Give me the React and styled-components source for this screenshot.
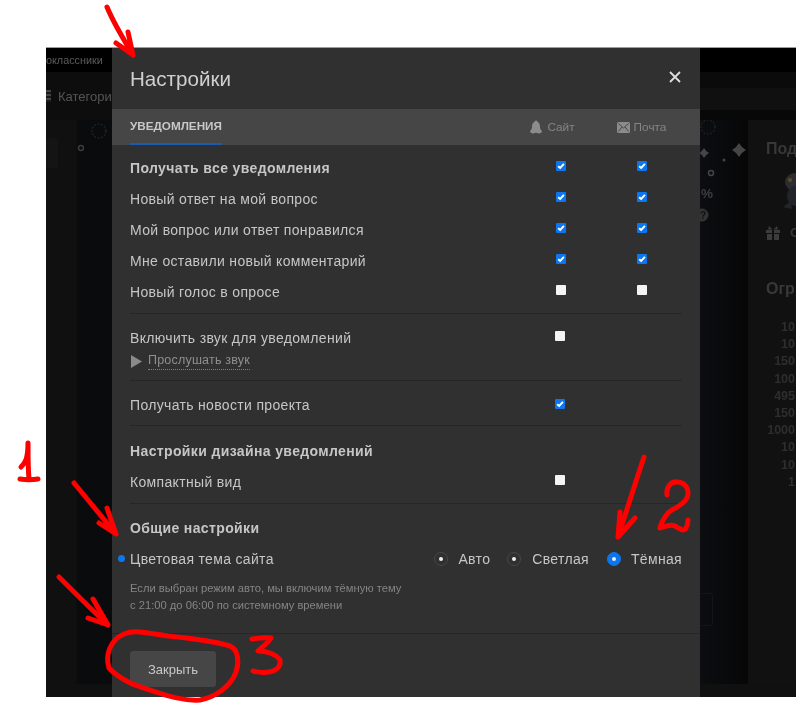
import React from "react";
import styled, { createGlobalStyle } from "styled-components";

const GlobalStyle = createGlobalStyle`
  html, body {
    margin: 0;
    background: #fff;
    font-family: "Liberation Sans", Arial, sans-serif;
  }
`;

const Page = styled.div`
  position: relative;
  width: 800px;
  height: 704px;
  padding: 47px 4px 7px 46px;
  box-sizing: border-box;
  overflow: hidden;
`;

const Screen = styled.div`
  display: flex;
  height: 650px;
  border-top: 1px solid #9a9ea2;
  box-sizing: border-box;
  filter: blur(0.35px);
`;

/* dimmed page behind the dialog */
const SideLeft = styled.div`
  width: 66px;
  flex: none;
  display: flex;
  flex-direction: column;
  overflow: hidden;
  background: linear-gradient(90deg, #101010 0, #101010 30px, #0a0b0d 31px, #0a0b0d 100%);
`;

const SideRight = styled.div`
  width: 96px;
  flex: none;
  display: flex;
  flex-direction: column;
  overflow: hidden;
  background: #0a0b0d;
`;

const TopBar = styled.div`
  height: 24px;
  flex: none;
  background: #000;
  color: #5c5c5c;
  font-size: 10.8px;
  line-height: 24px;
  white-space: nowrap;
`;

const NavBar = styled.div`
  height: 48px;
  flex: none;
  display: flex;
  align-items: center;
  gap: 7px;
  background: #0d0d0d;
  color: #555;
  font-size: 13px;
  white-space: nowrap;
`;

const NavStrip = styled.div`
  height: 48px;
  flex: none;
  background: linear-gradient(#0b0b0b 0 16px, #101010 16px 38px, #080808 38px);
`;

const MenuGlyph = styled.span`
  width: 5px;
  height: 12px;
  flex: none;
  background: repeating-linear-gradient(#444 0 2px, #1a1a1a 2px 4px);
`;

const LeftDeco = styled.svg`
  display: block;
  flex: 1;
`;

const BottomBand = styled.div`
  height: 13px;
  flex: none;
  background: #101010;
`;

const RightBody = styled.div`
  flex: 1;
  display: flex;
  min-height: 0;
`;

const Gutter = styled.div`
  width: 48px;
  flex: none;
  display: flex;
  flex-direction: column;
  justify-content: space-between;
  padding-bottom: 58px;
  background: linear-gradient(90deg, #0b0d10, #070707);
`;

const FaintBox = styled.div`
  width: 12px;
  height: 31px;
  border: 1px solid #131518;
  border-left: 0;
  border-radius: 0 3px 3px 0;
`;

const SidePanel = styled.div`
  flex: 1;
  padding: 19px 0 0 18px;
  background: #111;
  color: #383838;
  overflow: hidden;
  white-space: nowrap;
`;

const PanelTitle = styled.div`
  margin-top: ${(p) => p.$top || 0}px;
  font-size: 16px;
  font-weight: 700;
  line-height: 20px;
`;

const Owl = styled.svg`
  display: block;
  margin: 13px 0 0 17px;
`;

const PanelGift = styled.div`
  display: flex;
  align-items: center;
  gap: 10px;
  margin-top: 9px;
  font-size: 13px;
  font-weight: 700;
  svg {
    flex: none;
  }
`;

const Numbers = styled.div`
  margin-top: 20px;
  padding-right: 1px;
  text-align: right;
  font-size: 12.5px;
  font-weight: 700;
  line-height: 17.2px;
  color: #2e2e2e;
`;

/* dialog */
const Modal = styled.div`
  width: 588px;
  flex: none;
  display: flex;
  flex-direction: column;
  background: #303030;
  color: #c6c6c6;
`;

const Header = styled.div`
  height: 61px;
  flex: none;
  display: flex;
  align-items: center;
  justify-content: space-between;
  padding: 0 18px;
`;

const Title = styled.div`
  font-size: 20.6px;
  color: #cfcfcf;
`;

const CloseButton = styled.button`
  width: 14px;
  height: 14px;
  margin-top: -4px;
  padding: 0;
  display: flex;
  border: 0;
  background: none;
  color: #dedede;
`;

const TabBar = styled.div`
  height: 36px;
  flex: none;
  display: grid;
  grid-template-columns: 1fr 81px 81px;
  align-items: stretch;
  padding: 0 18px;
  background: #464646;
`;

const Tab = styled.div`
  justify-self: start;
  display: flex;
  align-items: center;
  padding-bottom: 2px;
  box-sizing: border-box;
  border-bottom: 2px solid #1b5bb0;
  font-size: 11.7px;
  font-weight: 700;
  color: #c8c8c8;
`;

const ColumnHead = styled.div`
  display: flex;
  align-items: center;
  justify-content: center;
  gap: ${(p) => p.$gap}px;
  padding-right: ${(p) => p.$shift || 0}px;
  font-size: 11.8px;
  color: #858585;
`;

const Body = styled.div`
  flex: 1;
  padding: 7px 18px 0;
`;

const Section = styled.div`
  padding-bottom: ${(p) => p.$bottom || 0}px;
  border-bottom: 1px solid #262626;
`;

const Row = styled.div`
  display: grid;
  grid-template-columns: 1fr 81px 81px;
  align-items: center;
  height: 31px;
  margin-top: ${(p) => p.$top || 0}px;
  font-size: 14px;
  letter-spacing: ${(p) => (p.$bold ? 0.37 : 0.33)}px;
  font-weight: ${(p) => (p.$bold ? 700 : 400)};
`;

const BoxCell = styled.div`
  display: flex;
  justify-content: center;
  transform: translate(${(p) => p.$x || 0}px, ${(p) => p.$y ?? -2}px);
`;

const CheckBox = styled.span`
  width: 10px;
  height: 10px;
  display: flex;
  border-radius: 1px;
  background: ${(p) => (p.$on ? "#0d76ee" : "#f4f4f4")};
`;

const ListenRow = styled.div`
  display: flex;
  align-items: center;
  gap: 5px;
  margin-top: -3px;
  height: 22px;
  font-size: 12.5px;
  letter-spacing: 0.2px;
  color: #8f8f8f;
`;

const ListenLink = styled.span`
  border-bottom: 1px dotted #808080;
  line-height: 14px;
  padding-bottom: 2px;
`;

const ThemeRow = styled.div`
  position: relative;
  display: flex;
  align-items: center;
  height: 31px;
  font-size: 14px;
  letter-spacing: 0.33px;
`;

const ThemeDot = styled.span`
  position: absolute;
  left: -12px;
  top: 12px;
  width: 7px;
  height: 7px;
  border-radius: 50%;
  background: #0d76ee;
`;

const ThemeLabel = styled.div`
  flex: 1;
`;

const RadioOption = styled.div`
  display: flex;
  align-items: center;
  gap: ${(p) => p.$gap}px;
  margin-left: ${(p) => p.$left || 0}px;
`;

const Radio = styled.span`
  width: 14px;
  height: 14px;
  box-sizing: border-box;
  display: flex;
  align-items: center;
  justify-content: center;
  border-radius: 50%;
  border: 1px solid ${(p) => (p.$on ? "#0d76ee" : "#474747")};
  background: ${(p) => (p.$on ? "#0d76ee" : "transparent")};
  &::after {
    content: "";
    width: 4px;
    height: 4px;
    border-radius: 50%;
    background: #eee;
  }
`;

const Hint = styled.div`
  margin-top: 6px;
  font-size: 11.2px;
  line-height: 17px;
  color: #858585;
`;

const Footer = styled.div`
  height: 64px;
  flex: none;
  box-sizing: border-box;
  padding: 17px 18px 0;
  border-top: 1px solid #262626;
`;

const CloseAction = styled.button`
  width: 86px;
  height: 36px;
  border: 0;
  border-radius: 3px;
  background: #464646;
  color: #c8c8c8;
  font-family: inherit;
  font-size: 13px;
`;

const Marks = styled.svg`
  position: absolute;
  left: 0;
  top: 0;
  pointer-events: none;
`;

const Check = ({ on }) => (
  <CheckBox $on={on}>
    {on && (
      <svg width="10" height="10" viewBox="0 0 10 10">
        <path d="M2.2 5.2 L4.2 7 L7.9 2.9" fill="none" stroke="#fff" strokeWidth="1.9" />
      </svg>
    )}
  </CheckBox>
);

const Bell = () => (
  <svg width="12" height="14" viewBox="0 0 12 14">
    <path d="M6 0.5c1 0 1.5.8 1.7 1.6C9.500 3 10 5 10 7c0 1.800.8 3 2 4 0 1.500-1.500 2.500-3 2.500-.8 0-1 -.8-3-.8s-2.200.8-3 .8c-1.500 0-3-1-3-2.500 1.200-1 2-2.200 2-4 0-2 .5-4 2.300-4.900C4.500 1.300 5 .5 6 .5z" fill="#8c8c8c" />
  </svg>
);

const Mail = () => (
  <svg width="13" height="11" viewBox="0 0 13 11">
    <rect width="13" height="11" rx="1.500" fill="#8c8c8c" />
    <path d="M1.500 1.500 L6.500 6 L11.500 1.500 M1.500 9.500 L5 5 M11.500 9.500 L8 5" fill="none" stroke="#464646" strokeWidth="1" />
  </svg>
);

const Sparkle = ({ x, y, r }) => (
  <path
    d={`M${x} ${y - r}Q${x + r * 0.35} ${y - r * 0.35} ${x + r} ${y}Q${x + r * 0.35} ${y + r * 0.35} ${x} ${y + r}Q${x - r * 0.35} ${y + r * 0.35} ${x - r} ${y}Q${x - r * 0.35} ${y - r * 0.35} ${x} ${y - r}z`}
    fill="#454545"
  />
);

const numbers = ["10", "10", "150", "100", "495", "150", "1000", "10", "10", "1"];

const App = () => (
  <Page>
    <GlobalStyle />
    <Screen>
      <SideLeft>
        <TopBar>оклассники</TopBar>
        <NavBar>
          <MenuGlyph />
          Категори
        </NavBar>
        <LeftDeco viewBox="0 0 66 565" preserveAspectRatio="xMinYMin">
          <circle cx="53" cy="11" r="7" fill="none" stroke="#3a3a3a" strokeWidth="1" strokeDasharray="1.500 2" />
          <circle cx="35" cy="28" r="2.500" fill="none" stroke="#3c3c3c" strokeWidth="1.500" />
          <rect x="0" y="18" width="12" height="30" rx="2" fill="#141414" />
        </LeftDeco>
        <BottomBand />
      </SideLeft>

      <Modal>
        <Header>
          <Title>Настройки</Title>
          <CloseButton aria-label="Закрыть">
            <svg width="14" height="14" viewBox="0 0 14 14">
              <path d="M2 2 L12 12 M12 2 L2 12" stroke="currentColor" strokeWidth="1.800" />
            </svg>
          </CloseButton>
        </Header>

        <TabBar>
          <Tab>УВЕДОМЛЕНИЯ</Tab>
          <ColumnHead $gap={5} $shift={16}>
            <Bell />
            Сайт
          </ColumnHead>
          <ColumnHead $gap={4}>
            <Mail />
            Почта
          </ColumnHead>
        </TabBar>

        <Body>
          <Section $bottom={6}>
            <Row $bold>
              Получать все уведомления
              <BoxCell><Check on /></BoxCell>
              <BoxCell><Check on /></BoxCell>
            </Row>
            <Row>
              Новый ответ на мой вопрос
              <BoxCell><Check on /></BoxCell>
              <BoxCell><Check on /></BoxCell>
            </Row>
            <Row>
              Мой вопрос или ответ понравился
              <BoxCell><Check on /></BoxCell>
              <BoxCell><Check on /></BoxCell>
            </Row>
            <Row>
              Мне оставили новый комментарий
              <BoxCell><Check on /></BoxCell>
              <BoxCell><Check on /></BoxCell>
            </Row>
            <Row>
              Новый голос в опросе
              <BoxCell><Check /></BoxCell>
              <BoxCell><Check /></BoxCell>
            </Row>
          </Section>

          <Section $bottom={8}>
            <Row $top={8}>
              Включить звук для уведомлений
              <BoxCell $x={-1}><Check /></BoxCell>
              <span />
            </Row>
            <ListenRow>
              <svg width="13" height="13" viewBox="0 0 13 13">
                <path d="M1 0 L12 6.500 L1 13z" fill="#8a8a8a" />
              </svg>
              <ListenLink>Прослушать звук</ListenLink>
            </ListenRow>
          </Section>

          <Section $bottom={5}>
            <Row $top={8}>
              Получать новости проекта
              <BoxCell $x={-1} $y={-1}><Check on /></BoxCell>
              <span />
            </Row>
          </Section>

          <Section $bottom={6}>
            <Row $bold $top={9}>
              Настройки дизайна уведомлений
              <span />
              <span />
            </Row>
            <Row>
              Компактный вид
              <BoxCell $x={-1}><Check /></BoxCell>
              <span />
            </Row>
          </Section>

          <Row $bold $top={8}>
            Общие настройки
            <span />
            <span />
          </Row>
          <ThemeRow>
            <ThemeDot />
            <ThemeLabel>Цветовая тема сайта</ThemeLabel>
            <RadioOption $gap={10}>
              <Radio />
              Авто
            </RadioOption>
            <RadioOption $gap={11} $left={17}>
              <Radio />
              Светлая
            </RadioOption>
            <RadioOption $gap={10} $left={18}>
              <Radio $on />
              Тёмная
            </RadioOption>
          </ThemeRow>
          <Hint>
            Если выбран режим авто, мы включим тёмную тему
            <br />
            с 21:00 до 06:00 по системному времени
          </Hint>
        </Body>

        <Footer>
          <CloseAction>Закрыть</CloseAction>
        </Footer>
      </Modal>

      <SideRight>
        <TopBar />
        <NavStrip />
        <RightBody>
          <Gutter>
            <svg width="48" height="110" viewBox="0 0 48 110">
              <circle cx="8" cy="7" r="7" fill="none" stroke="#333" strokeWidth="1" strokeDasharray="1.500 2" />
              <Sparkle x={4} y={33} r={5} />
              <Sparkle x={39} y={30} r={7} />
              <circle cx="24" cy="40" r="1.500" fill="#454545" />
              <circle cx="11" cy="53" r="2.500" fill="none" stroke="#454545" strokeWidth="1.500" />
              <text x="1" y="78" fontSize="13.5" fontFamily="Liberation Sans" fontWeight="700" fill="#3e3e3e">%</text>
              <circle cx="2" cy="95" r="6.500" fill="#333" />
              <text x="0" y="99" fontSize="10" fontFamily="Liberation Sans" fontWeight="700" fill="#111">?</text>
            </svg>
            <FaintBox />
          </Gutter>
          <SidePanel>
            <PanelTitle>Под</PanelTitle>
            <Owl width="30" height="44" viewBox="0 0 30 44">
              <ellipse cx="12" cy="10" rx="10" ry="9" fill="#2b2d33" />
              <ellipse cx="12" cy="24" rx="8" ry="10" fill="#22242a" />
              <circle cx="7" cy="8" r="2" fill="#6a4a1a" />
              <path d="M0 35 L8 29 L9 37z" fill="#22242a" />
            </Owl>
            <PanelGift>
              <svg width="14" height="14" viewBox="0 0 14 14">
                <path d="M0 4h6v3H0zM8 4h6v3H8zM1 8h5v6H1zM8 8h5v6H8zM3 0l3.500 3.500L2 3.500zM11 0L7.500 3.500 12 3.500z" fill="#3c3c3c" />
              </svg>
              С
            </PanelGift>
            <PanelTitle $top={39}>Огр</PanelTitle>
            <Numbers>
              {numbers.map((n, i) => (
                <div key={i}>{n}</div>
              ))}
            </Numbers>
          </SidePanel>
        </RightBody>
        <BottomBand />
      </SideRight>
    </Screen>

    <Marks width="800" height="704" viewBox="0 0 800 704" fill="none" stroke="#ff0000" strokeWidth="5" strokeLinecap="round" strokeLinejoin="round">
      <path d="M107 7 C114 24 124 40 133 55 M116 43 L133 55 L128 32" />
      <path d="M21 467 C25 463 28 459 28 443 C28 455 28 468 29 479 M20 479 C26 480 32 480 38 479" />
      <path d="M74 483 C88 500 103 518 116 534 M99 523 L116 534 L107 508" />
      <path d="M59 577 C74 592 92 610 108 625 M88 618 L108 625 L93 599" />
      <path d="M644 457 C635 484 626 512 618 537 M620 512 L618 537 L635 518" />
      <path d="M667 495 C666 487 671 481 678 482 C686 483 690 490 687 498 C683 506 673 508 668 513 C664 518 661 523 660 528 C666 526 671 524 675 526 C680 529 684 532 686 528 C688 525 688 522 688 520" />
      <path d="M252 639 C258 638 264 637 271 638 C268 643 262 647 258 651 C266 651 276 654 280 660 C281 667 276 671 269 672 C263 673 257 672 253 671" />
      <path d="M109 668 C105 655 110 640 124 634 C136 629 152 634 168 636 C188 638 214 641 230 646 C239 650 239 663 236 672 C231 686 216 697 200 700 C186 701 170 697 156 692 C140 687 122 682 109 668 Z" />
    </Marks>
  </Page>
);

export default App;
